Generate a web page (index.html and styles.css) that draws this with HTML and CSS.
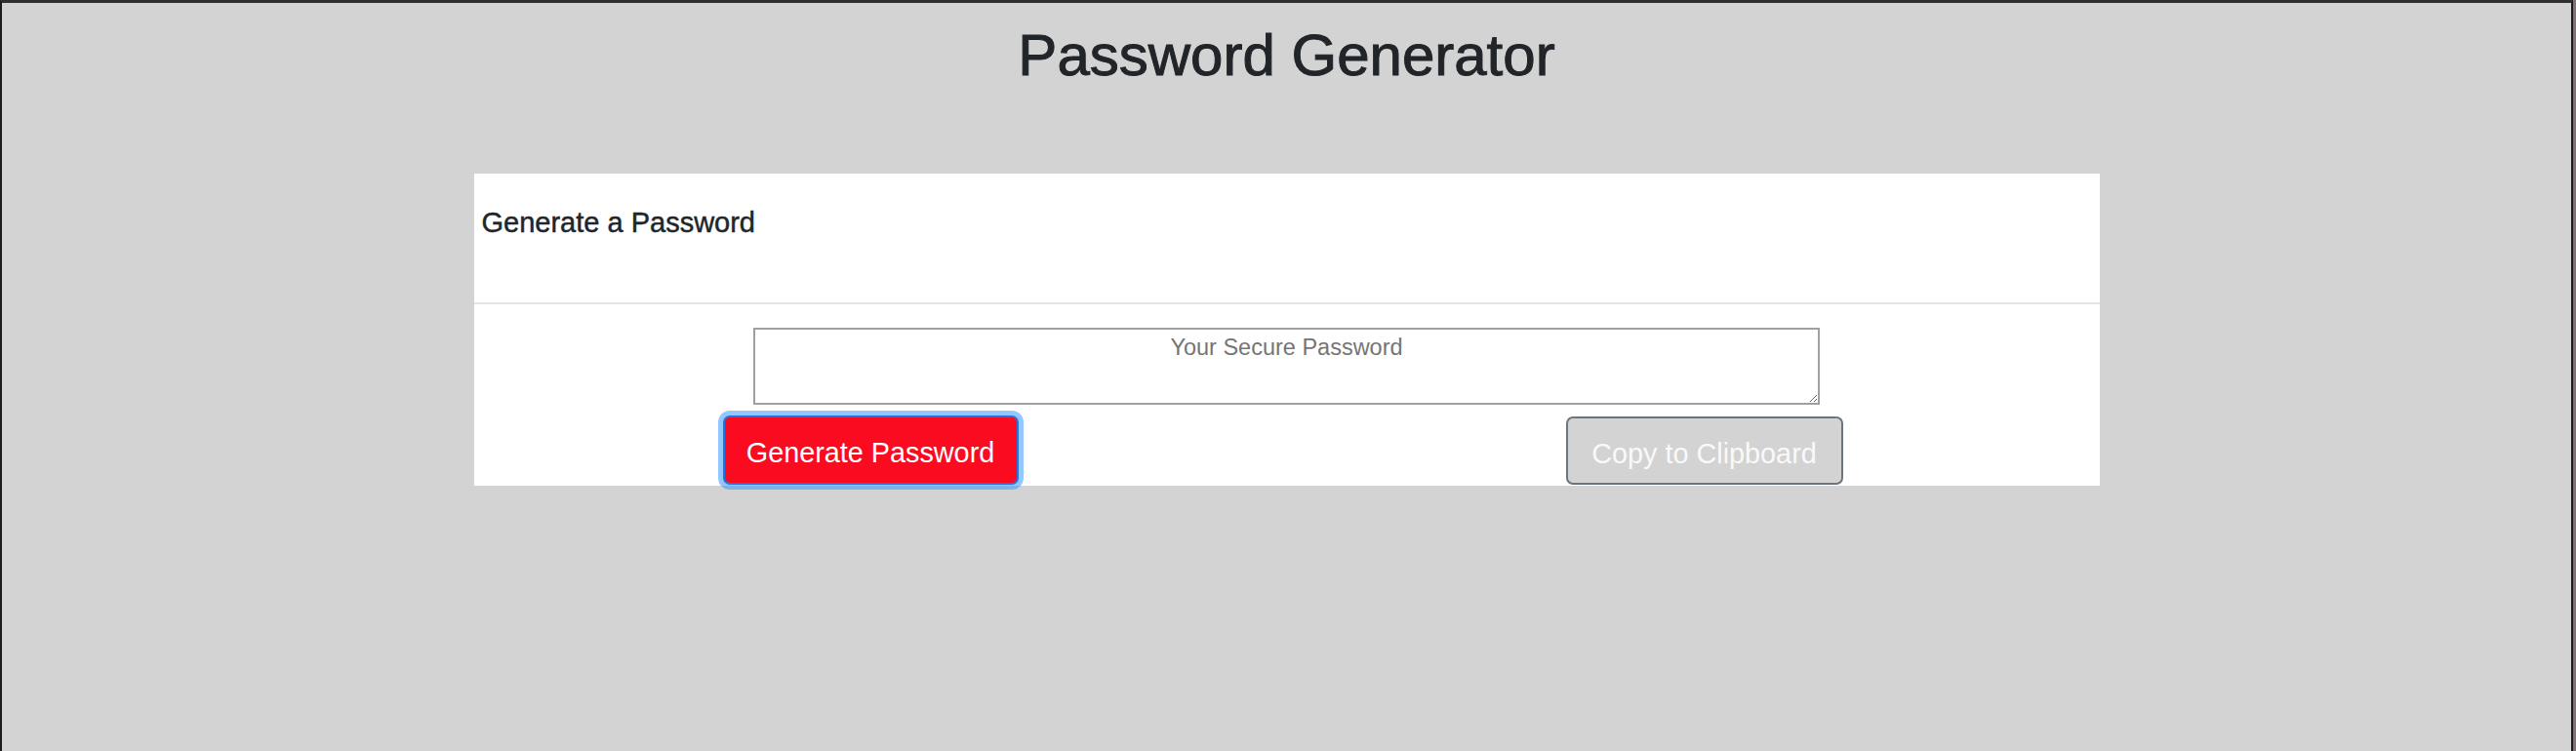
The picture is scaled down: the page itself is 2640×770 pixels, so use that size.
FILE: index.html
```html
<!DOCTYPE html>
<html lang="en">
<head>
<meta charset="utf-8">
<title>Password Generator</title>
<link rel="stylesheet" href="styles.css">
</head>
<body>
<div class="window">
  <h1 class="title">Password Generator</h1>
  <div class="card">
    <div class="card-header">
      <h2 class="card-title">Generate a Password</h2>
    </div>
    <div class="card-body">
      <textarea class="password" placeholder="Your Secure Password" aria-label="Generated Password"></textarea>
      <div class="actions">
        <button class="btn btn-generate" type="button">Generate Password</button>
        <button class="btn btn-copy" type="button" disabled>Copy to Clipboard</button>
      </div>
    </div>
  </div>
</div>
</body>
</html>
```

FILE: styles.css
```css
html {
  background: #7f7374;
}

body {
  margin: 0;
  font-family: "Liberation Sans", Arial, Helvetica, sans-serif;
  color: #212529;
}

.window {
  box-sizing: border-box;
  min-height: 770px;
  margin-right: 3px;
  background: #d3d3d3;
  border-top: 3px solid #2f2f31;
  border-left: 2px solid #1c1c1c;
  border-right: 2px solid #1c1c1c;
  overflow: hidden;
}

.title {
  margin: 18px 0 85px;
  font-size: 60px;
  line-height: 72px;
  font-weight: 400;
  text-align: center;
  color: #212529;
  -webkit-text-stroke: 1px #212529;
}

.card {
  width: 1666px;
  margin: 0 auto;
  background: #ffffff;
}

.card-header {
  padding: 33px 8px 64px;
  border-bottom: 2px solid #e4e4e4;
}

.card-title {
  margin: 0;
  font-size: 29px;
  line-height: 35px;
  font-weight: 400;
  color: #212529;
  -webkit-text-stroke: 0.45px #212529;
}

.card-body {
  padding: 24px 0 1px;
}

.password {
  display: block;
  box-sizing: border-box;
  width: 1093px;
  height: 79px;
  margin: 0 auto;
  padding: 1px 3px;
  border: 2px solid #a0a0a0;
  font-family: "Liberation Sans", Arial, Helvetica, sans-serif;
  font-size: 23.5px;
  line-height: 1.5;
  text-align: center;
  color: #212529;
  background: #ffffff;
}

.password::placeholder {
  color: #757575;
}

.actions {
  display: flex;
  justify-content: space-between;
  align-items: flex-start;
  margin-top: 11px;
  padding: 0 263px 0 255px;
}

.btn {
  box-sizing: border-box;
  height: 71px;
  padding: 14px 0 10px;
  border-radius: 7px;
  font-family: "Liberation Sans", Arial, Helvetica, sans-serif;
  font-size: 28.8px;
  line-height: 44px;
  font-weight: 400;
  text-align: center;
  white-space: nowrap;
}

.btn-generate {
  width: 303px;
  background: #fa0b1f;
  color: #ffffff;
  border: 2px solid #1f74e6;
  box-shadow: 0 0 0 5px rgba(38, 143, 255, 0.5);
}

.btn-copy {
  width: 284px;
  margin-top: 1px;
  height: 70px;
  background: #d3d3d3;
  color: #f8f9fa;
  border: 2px solid #6c757d;
}
```
